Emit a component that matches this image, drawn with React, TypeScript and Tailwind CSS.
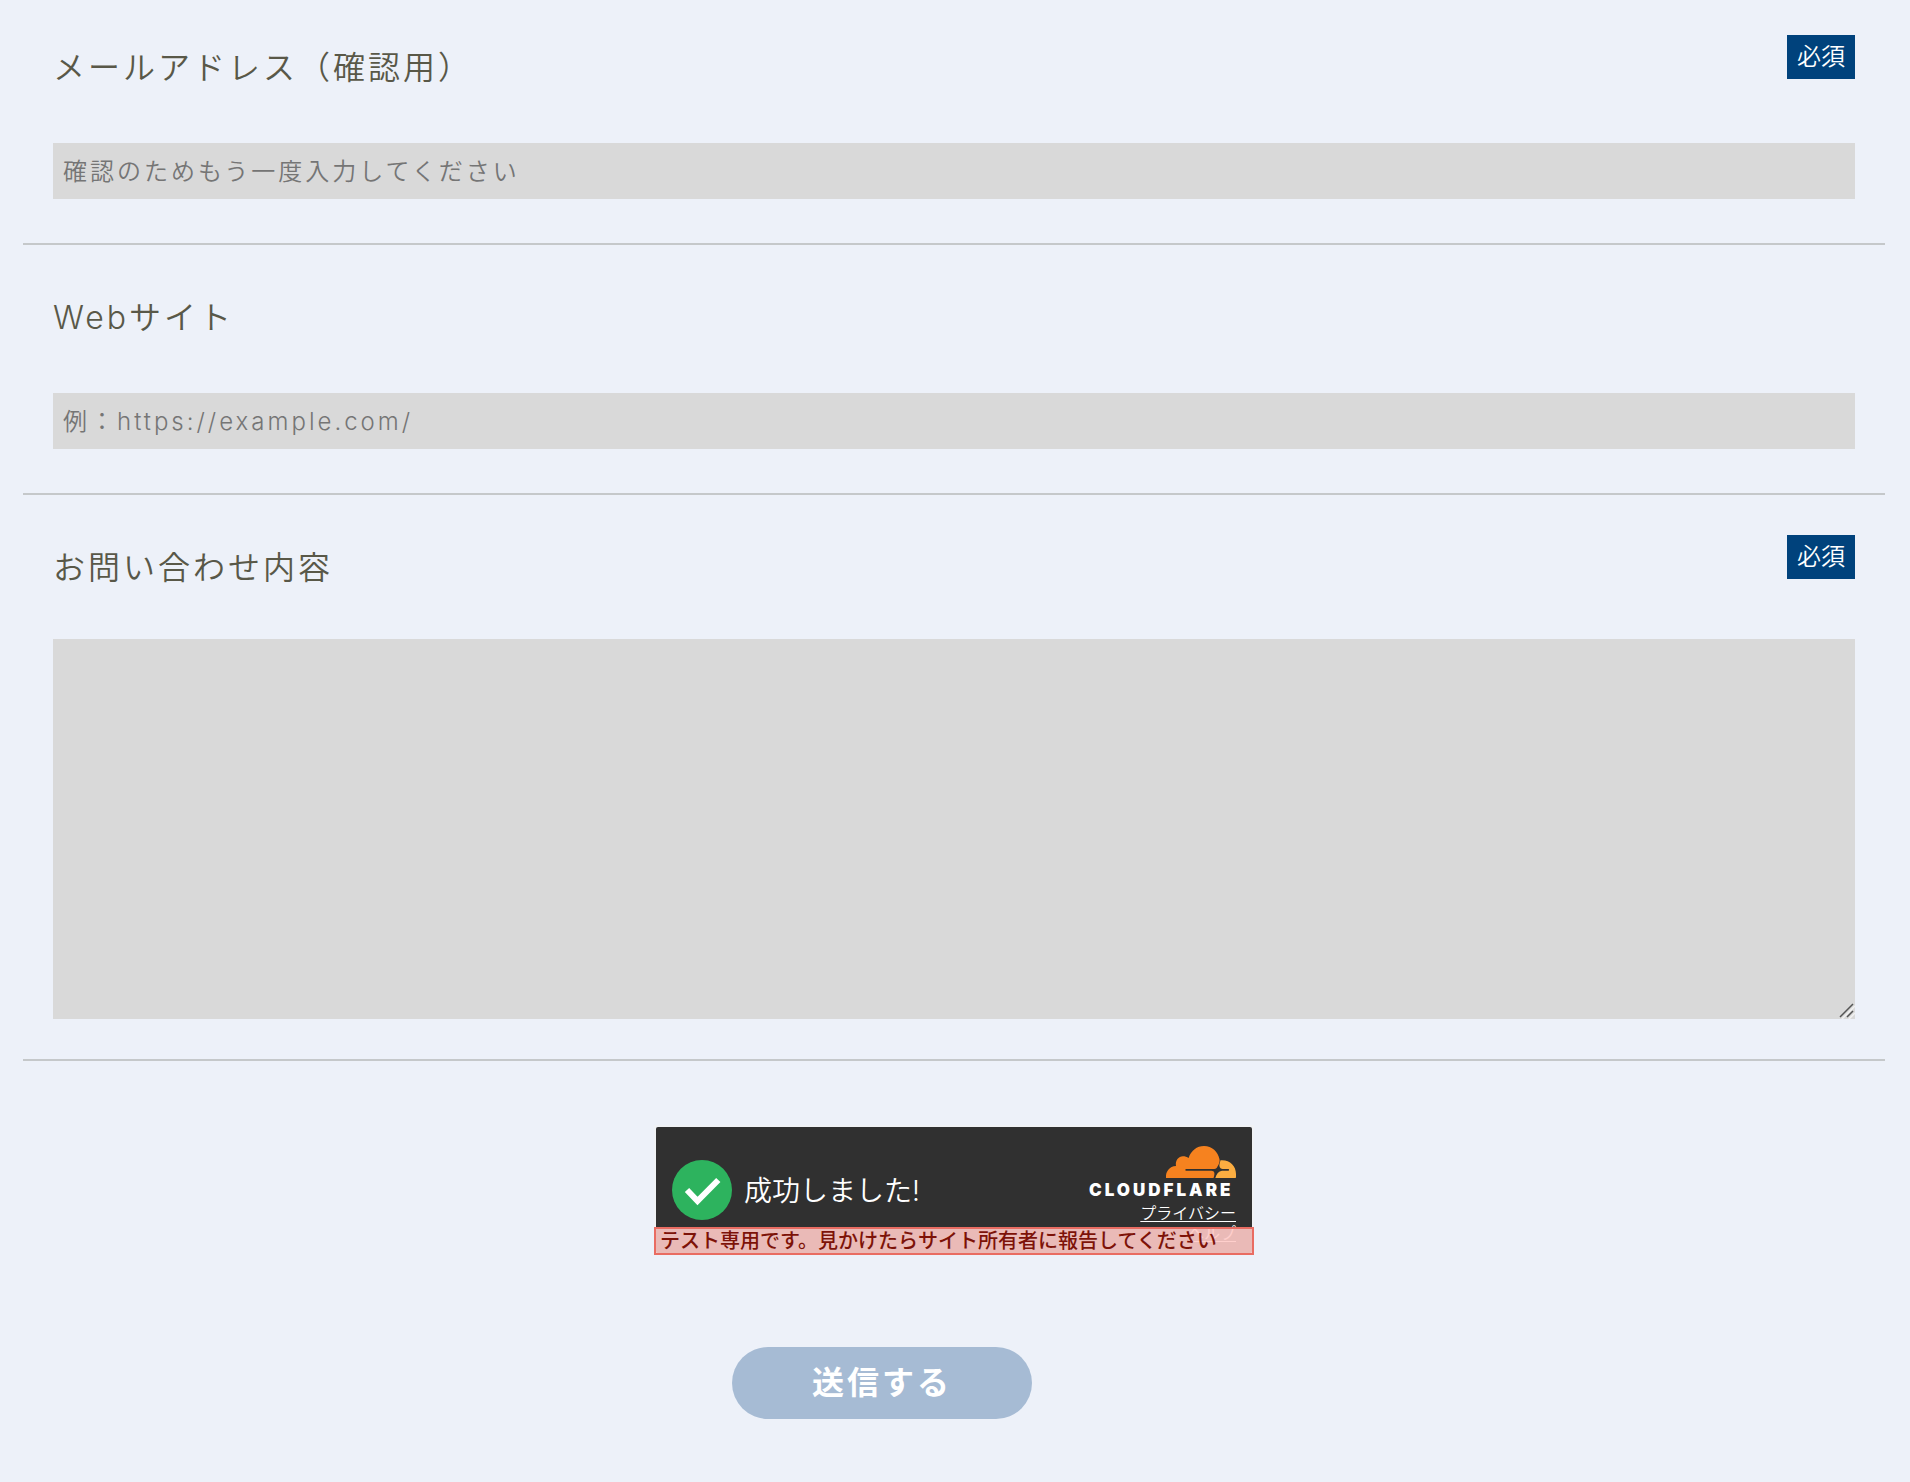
import React from 'react';

const FONT = "font-['Inter','Noto_Sans_CJK_JP',sans-serif]";

type FieldRowProps = {
    id: string;
    label: string;
    required?: boolean;
    children: React.ReactNode;
};

const FieldRow = ({ id, label, required, children }: FieldRowProps) => (
    <div className="border-b-2 border-[#c5c8ca] px-[30px] pt-10 first:pt-[35px]">
        <div className="flex items-start justify-between">
            <label htmlFor={id} className="text-[32px] leading-[66px] font-[350] tracking-[3px] text-[#595848]">
                {label}
            </label>
            {required && (
                <span className="bg-[#00427c] px-[10px] text-2xl leading-11 font-[350] text-white">必須</span>
            )}
        </div>
        {children}
    </div>
);

const INPUT_CLASS =
    'mt-[42px] mb-11 block h-14 w-full bg-[#d9d9d9] px-[10px] text-2xl font-[350] tracking-[3px] text-[#595848] outline-none placeholder:text-[#757575]';

const CloudflareLogo = () => (
    <svg width="146" height="51" viewBox="0 0 146 51" className="overflow-visible" role="img" aria-label="Cloudflare">
        <g transform="translate(76 0)">
            <path
                fill="#f6821f"
                d="M0 32C-.6 25.500 3.500 20.500 10 20.100C9 14.500 12.500 10.200 17 10.200C19 10.200 21 10.800 22.600 12C25 4.500 31 0 38 0C46 0 52 5.800 53.500 13.200C54 15.500 53 18 51.500 20.500C51 21.800 50 22.800 48.300 23H20.200C19 23.100 19 24.700 20.200 24.800H45.500C48.500 25 49 27.500 48 30.500L47.500 32Z"
            />
            <path
                fill="#fbad41"
                d="M54.500 14.300C63.500 13.500 70 19.500 70 28V31C70 31.700 69.700 32 69 32H49.300C50.500 28 52.500 25.300 56 24.800H62.300C63.400 24.700 63.400 23.100 62.300 23H56.500C53.800 22.600 53 20.500 53.500 18Z"
            />
        </g>
        <text x="-1" y="50" fill="#fff" className="font-[Inter] text-[17px] font-black tracking-[3px]">
            CLOUDFLARE
        </text>
    </svg>
);

const Turnstile = () => (
    <div className="relative h-[130px] w-[600px] border-2 border-[#f0f2f5]">
        <div className="flex h-full justify-between rounded-[2px] bg-[#303030] px-4">
            <div className="flex items-center gap-3">
                <svg width="60" height="60" viewBox="0 0 60 60" aria-hidden="true">
                    <circle cx="30" cy="30" r="30" fill="#2db35e" />
                    <path d="M15 30L25.500 41L46.300 20" fill="none" stroke="#fff" strokeWidth="6" />
                </svg>
                <span className="pt-[2px] text-[28px] font-[350] text-white">成功しました!</span>
            </div>
            <div className="flex flex-col items-end pt-[19px] text-white">
                <CloudflareLogo />
                <a href="#privacy" className="mt-[6px] text-base leading-5 font-[350] underline underline-offset-2">
                    プライバシー
                </a>
                <a href="#help" className="text-base leading-5 font-[350] underline underline-offset-2">
                    ヘルプ
                </a>
            </div>
        </div>
        {/* Test key notice, laid over the bottom of the widget */}
        <p className="absolute -inset-x-[2px] -bottom-[2px] h-7 border-2 border-[#e96c62] bg-[#ffcac7]/90 px-1 text-xl leading-6 font-medium text-[#7d1208]">
            テスト専用です。見かけたらサイト所有者に報告してください
        </p>
    </div>
);

const App = () => {
    return (
        <main className={`min-h-screen bg-[#edf1f9] pr-[25px] pb-16 pl-[23px] ${FONT}`}>
            <form onSubmit={(e) => e.preventDefault()}>
                <div>
                    <FieldRow id="email-confirm" label="メールアドレス（確認用）" required>
                        <input
                            id="email-confirm"
                            type="email"
                            placeholder="確認のためもう一度入力してください"
                            className={INPUT_CLASS}
                        />
                    </FieldRow>
                    <FieldRow id="website" label="Webサイト">
                        <input id="website" type="url" placeholder="例：https://example.com/" className={INPUT_CLASS} />
                    </FieldRow>
                    <FieldRow id="message" label="お問い合わせ内容" required>
                        <div className="relative mt-[38px] mb-10">
                            <textarea
                                id="message"
                                className="block h-[380px] w-full resize-none bg-[#d9d9d9] p-[10px] text-2xl font-[350] tracking-[3px] text-[#595848] outline-none"
                            />
                            {/* Resize grip */}
                            <svg className="pointer-events-none absolute right-0 bottom-0" width="18" height="18" aria-hidden="true">
                                <path d="M5 18L18 5M12 18L18 12" stroke="#f2f2f2" strokeWidth="1.500" />
                                <path d="M3 16L16 3M10 16L16 10" stroke="#555" strokeWidth="1.500" />
                            </svg>
                        </div>
                    </FieldRow>
                </div>

                <div className="mt-16 flex justify-center">
                    <Turnstile />
                </div>

                <div className="mt-[92px] flex justify-center pr-36">
                    <button
                        type="submit"
                        className="h-[72px] w-[300px] rounded-full bg-[#a6bbd4] text-[32px] font-bold tracking-[3px] text-white"
                    >
                        送信する
                    </button>
                </div>
            </form>
        </main>
    );
};

export default App;
